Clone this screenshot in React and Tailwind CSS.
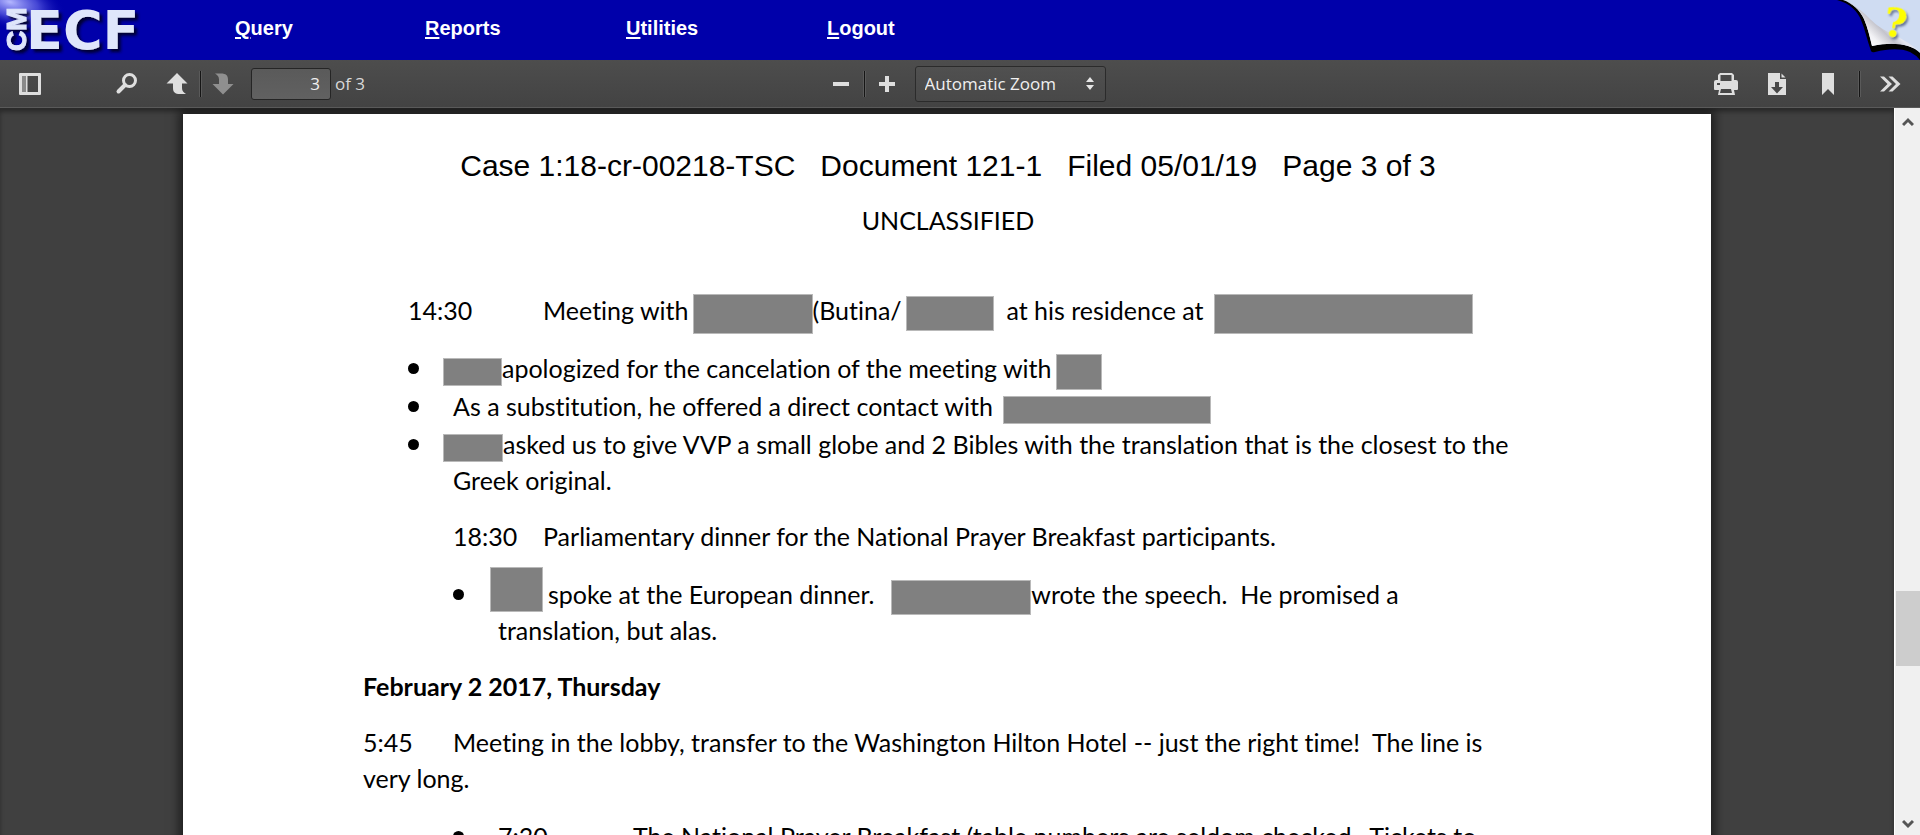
import React from "react";

const NAV = [
  { key: "Q", rest: "uery", width: "w-[190px]" },
  { key: "R", rest: "eports", width: "w-[201px]" },
  { key: "U", rest: "tilities", width: "w-[201px]" },
  { key: "L", rest: "ogout", width: "w-[201px]" },
];

function Logo() {
  return (
    <svg className="h-[60px] w-[160px]" viewBox="0 0 160 60" role="img" aria-label="CM ECF">
      <defs>
        <radialGradient id="flare" gradientUnits="userSpaceOnUse" cx="10" cy="0" r="56" gradientTransform="matrix(1 0.2 0 0.5 0 0)">
          <stop offset="0" stopColor="#b4b7ff" />
          <stop offset="0.5" stopColor="#5658e0" stopOpacity="0.8" />
          <stop offset="1" stopColor="#0000aa" stopOpacity="0" />
        </radialGradient>
        <filter id="logoShadow" x="-20%" y="-20%" width="150%" height="150%">
          <feDropShadow dx="3" dy="3" stdDeviation="1.5" floodColor="#000022" floodOpacity="0.9" />
        </filter>
      </defs>
      <rect width="100" height="44" fill="url(#flare)" />
      <g fill="#dfe6fb" fontWeight="700" filter="url(#logoShadow)">
        <text x="26" y="49" fontFamily="DejaVu Sans, sans-serif" fontSize="54">
          ECF
        </text>
        <text
          transform="translate(26 51) rotate(-90)"
          fontFamily="Liberation Sans, sans-serif"
          fontSize="28"
          stroke="#dfe6fb"
          strokeWidth="1"
        >
          CM
        </text>
      </g>
    </svg>
  );
}

function HelpCorner() {
  return (
    <svg className="h-[60px] w-[86px]" viewBox="0 0 86 60" aria-hidden="true">
      <defs>
        <linearGradient id="curl" gradientUnits="userSpaceOnUse" x1="34" y1="46" x2="54" y2="26">
          <stop offset="0" stopColor="#ffffff" />
          <stop offset="0.35" stopColor="#f2f2f5" />
          <stop offset="0.75" stopColor="#c4c4cc" />
          <stop offset="1" stopColor="#e4e6f0" />
        </linearGradient>
        <filter id="markShadow" x="-30%" y="-30%" width="170%" height="170%">
          <feDropShadow dx="2" dy="2" stdDeviation="1" floodColor="#4a5a80" floodOpacity="0.8" />
        </filter>
      </defs>
      <path d="M3 0C16 3 24 12 27 20C31 29 33 40 37 51Q38 53 41 52C54 49 66 48 76 52Q82 55 86 60V0Z" fill="#000" />
      <path d="M9 0C18 3 26 10 30 19C34 28 36 38 38 46C52 43 64 43 74 46Q81 48 86 53V0Z" fill="#cfdcf2" />
      <path d="M9 0C18 3 26 10 30 19C34 28 36 38 38 46C52 43 64 43 74 46Q81 48 86 52C76 43 66 38 56 33C46 28 40 23 34 17C26 9 18 3 9 0Z" fill="url(#curl)" />
      <text
        x="50"
        y="37"
        transform="rotate(8 62 22)"
        fill="#ffff00"
        fontFamily="DejaVu Serif, serif"
        fontWeight="700"
        fontSize="40"
        filter="url(#markShadow)"
      >
        ?
      </text>
    </svg>
  );
}

function ToolIcon({ children, className = "" }) {
  return (
    <svg className={"block h-6 w-6 " + className} viewBox="0 0 24 24" fill="#dedede" aria-hidden="true">
      {children}
    </svg>
  );
}

function ToolButton({ label, children, className = "" }) {
  return (
    <button type="button" aria-label={label} className={"flex h-8 items-center justify-center " + className}>
      {children}
    </button>
  );
}

function Separator() {
  return <span className="h-[26px] w-[3px] border-x border-[#5a5a5a] bg-[#151515]" />;
}

function Toolbar() {
  return (
    <div className="grid h-12 shrink-0 grid-cols-[1fr_auto_1fr] items-center border-b border-[#5a5a5a] bg-linear-to-b from-[#4d4d4d] to-[#434343] font-['Open_Sans',sans-serif] text-[17px] text-[#d9d9d9]">
      <div className="flex items-center">
        <ToolButton label="Toggle Sidebar" className="ml-3 w-9">
          <ToolIcon>
            <path fillRule="evenodd" d="M2 1h20a1 1 0 0 1 1 1v20a1 1 0 0 1-1 1H2a1 1 0 0 1-1-1V2a1 1 0 0 1 1-1zM9.500 4v16H20V4z" />
            <path d="M4 4h4v16H4z" fill="#8a8a8a" />
          </ToolIcon>
        </ToolButton>
        <ToolButton label="Find in Document" className="ml-[61px] w-9">
          <ToolIcon>
            <circle cx="14.500" cy="8.500" r="6" fill="none" stroke="#dedede" strokeWidth="3" />
            <path d="M10 13L3.500 19.500" fill="none" stroke="#dedede" strokeWidth="4" strokeLinecap="round" />
          </ToolIcon>
        </ToolButton>
        <ToolButton label="Previous Page" className="ml-[14px] w-9">
          <ToolIcon>
            <path d="M12 1L22.500 11.500H17V16c0 3 1.500 4.500 4 6h-6c-5 0-7-2-7-6v-4.500H1.500z" />
          </ToolIcon>
        </ToolButton>
        <span className="ml-[4px] flex">
          <Separator />
        </span>
        <ToolButton label="Next Page" className="ml-[3px] w-9">
          <ToolIcon>
            <path fill="#8f8f8f" d="M12 22.500L22.500 12H17V7.500c0-4-2-6-7-6H4c2.500 1.500 4 3 4 6V12H1.500z" />
          </ToolIcon>
        </ToolButton>
        <input
          aria-label="Page"
          defaultValue="3"
          className="ml-[10px] h-8 w-20 rounded-[3px] border border-[#252525] bg-linear-to-b from-[#5a5a5a] to-[#616161] pr-[10px] text-right text-[17px] text-[#f0f0f0]"
        />
        <span className="ml-1">of 3</span>
      </div>
      <div className="flex items-center pl-2">
        <ToolButton label="Zoom Out" className="w-9">
          <ToolIcon>
            <path d="M4 10h16v4H4z" />
          </ToolIcon>
        </ToolButton>
        <span className="ml-[4px] flex">
          <Separator />
        </span>
        <ToolButton label="Zoom In" className="ml-[3px] w-9">
          <ToolIcon>
            <path d="M10 4h4v6h6v4h-6v6h-4v-6H4v-4h6z" />
          </ToolIcon>
        </ToolButton>
        <div className="relative ml-[10px]">
          <select
            aria-label="Zoom"
            className="block h-9 w-[191px] appearance-none rounded-[3px] border border-[#2b2b2b] bg-linear-to-b from-[#505050] to-[#484848] pl-[9px] text-[17px] text-[#f0f0f0]"
          >
            <option>Automatic Zoom</option>
          </select>
          <svg className="pointer-events-none absolute top-[11px] right-[12px] h-[13px] w-2" viewBox="0 0 8 13" fill="#e6e6e6" aria-hidden="true">
            <path d="M4 0L8 5H0zM4 13L0 8H8z" />
          </svg>
        </div>
      </div>
      <div className="flex items-center justify-end">
        <ToolButton label="Print" className="w-9">
          <ToolIcon>
            <path fillRule="evenodd" d="M6 1h12l2 2v5h2q2 0 2 2v7q0 1-1 1h-3l1 5H4l1-5H1q-1 0-1-1v-7q0-2 2-2h2V3zM6.500 3v6h11V3zM7 17l-1 4h12l-1-4zM3 11v2h3v-2z" />
          </ToolIcon>
        </ToolButton>
        <ToolButton label="Download" className="ml-[15px] w-9">
          <ToolIcon>
            <path fillRule="evenodd" d="M3 1h12v6h6v16H3zM10 10v5H6l6 6.500L18 15h-4v-5z" />
            <path d="M16.500 1.500L20.500 5.500H16.500z" />
          </ToolIcon>
        </ToolButton>
        <ToolButton label="Current View" className="ml-[15px] w-9">
          <ToolIcon>
            <path d="M6 1h12v22l-6-6-6 6z" />
          </ToolIcon>
        </ToolButton>
        <span className="ml-[12px] flex">
          <Separator />
        </span>
        <ToolButton label="Tools" className="mr-3 ml-[11px] w-9">
          <ToolIcon>
            <path d="M2 4.500h4L14 12l-8 7.500H2L9.500 12zM10.500 4.500h4L22.500 12l-8 7.500h-4L18 12z" />
          </ToolIcon>
        </ToolButton>
      </div>
    </div>
  );
}

function Redaction({ className }) {
  return <span className={"inline-block border border-[#b9b9b9] bg-[#808080] align-middle " + className} />;
}

function Item({ children }) {
  return (
    <li className="flex">
      <span className="flex h-9 w-[45px] shrink-0 items-center">
        <span className="size-[11px] rounded-full bg-black" />
      </span>
      <div className="min-w-0 flex-1">{children}</div>
    </li>
  );
}

function Page() {
  return (
    <article className="w-[1528px] max-w-full bg-white pt-[34px] pr-[178px] pl-[180px] font-[Lato,sans-serif] text-[25px] leading-9 text-black shadow-[0_0_10px_4px_rgba(0,0,0,0.55)] [font-variant-ligatures:none]">
      <h1 className="text-center font-['Liberation_Sans',sans-serif] text-[30px] whitespace-pre">
        Case 1:18-cr-00218-TSC   Document 121-1   Filed 05/01/19   Page 3 of 3
      </h1>
      <p className="mt-[18px] text-center">UNCLASSIFIED</p>
      <p className="mt-[54px] flex pl-[45px] whitespace-pre">
        <span className="w-[135px]">14:30</span>
        <span>
          Meeting with
          <Redaction className="-my-2 ml-1 h-10 w-[120px]" />
          (Butina/
          <Redaction className="-my-2 ml-1 h-[35px] w-[88px]" />
          {"  at his residence at "}
          <Redaction className="-my-2 ml-1 h-10 w-[259px]" />
        </span>
      </p>
      <ul className="mt-[22px] flex flex-col gap-[2px] pl-[45px]">
        <Item>
          <Redaction className="-my-2 -ml-[10px] h-7 w-[59px]" />
          apologized for the cancelation of the meeting with
          <Redaction className="-my-2 ml-1 h-9 w-[46px]" />
        </Item>
        <Item>
          As a substitution, he offered a direct contact with <Redaction className="-my-2 ml-1 h-7 w-[208px]" />
        </Item>
        <Item>
          <Redaction className="-my-2 -ml-[10px] h-7 w-[60px]" />
          asked us to give VVP a small globe and 2 Bibles with the translation that is the closest to the Greek original.
        </Item>
      </ul>
      <p className="mt-5 flex pl-[90px]">
        <span className="w-[90px]">18:30</span>
        <span>Parliamentary dinner for the National Prayer Breakfast participants.</span>
      </p>
      <ul className="mt-[22px] pl-[90px]">
        <Item>
          <Redaction className="-mt-5 mr-[5px] -mb-1 -ml-[8px] h-[45px] w-[53px]" />
          spoke at the European dinner.&nbsp; <Redaction className="-my-2 ml-1 h-[35px] w-[140px]" />
          wrote the speech.&nbsp; He promised a <br />
          translation, but alas.
        </Item>
      </ul>
      <h2 className="mt-5 font-bold">February 2 2017, Thursday</h2>
      <p className="mt-5">
        <span className="inline-block w-[90px]">5:45</span>
        Meeting in the lobby, transfer to the Washington Hilton Hotel -- just the right time!&nbsp; The line is very long.
      </p>
      <ul className="mt-[22px] pl-[90px]">
        <Item>
          <span className="inline-block w-[135px]">7:30</span>
          The National Prayer Breakfast (table numbers are seldom checked.&nbsp; Tickets to
        </Item>
      </ul>
    </article>
  );
}

function Scrollbar() {
  return (
    <div className="flex w-[26px] shrink-0 flex-col items-center border-l border-white bg-[#f0f0f0]" aria-hidden="true">
      <svg className="mt-[8px] h-3 w-3" viewBox="0 0 12 12" fill="none" stroke="#555" strokeWidth="3">
        <path d="M1 9l5-5 5 5" />
      </svg>
      <span className="grow-[460]" />
      <span className="h-[75px] w-6 bg-[#cdcdcd]" />
      <span className="grow-[152]" />
      <svg className="mb-[4px] h-3 w-3" viewBox="0 0 12 12" fill="none" stroke="#555" strokeWidth="3">
        <path d="M1 2l5 5 5-5" />
      </svg>
    </div>
  );
}

export default function App() {
  return (
    <div className="flex h-screen flex-col overflow-hidden bg-[#404040]">
      <header className="flex h-[60px] shrink-0 items-center bg-[#0000aa]">
        <Logo />
        <nav className="ml-[75px] flex font-['Liberation_Sans',sans-serif] text-[20px] leading-6 font-bold text-white">
          {NAV.map((item) => (
            <span key={item.key} className={"-mt-[4px] " + item.width}>
              <a href="#">
                <span className="underline decoration-2 underline-offset-2">{item.key}</span>
                {item.rest}
              </a>
            </span>
          ))}
        </nav>
        <a href="#" aria-label="Help" className="ml-auto">
          <HelpCorner />
        </a>
      </header>
      <Toolbar />
      <div className="flex min-h-0 flex-1">
        <main className="flex min-w-0 flex-1 items-start justify-center overflow-hidden pt-[6px] shadow-[inset_0_4px_4px_rgba(0,0,0,0.35)]">
          <Page />
        </main>
        <Scrollbar />
      </div>
    </div>
  );
}
